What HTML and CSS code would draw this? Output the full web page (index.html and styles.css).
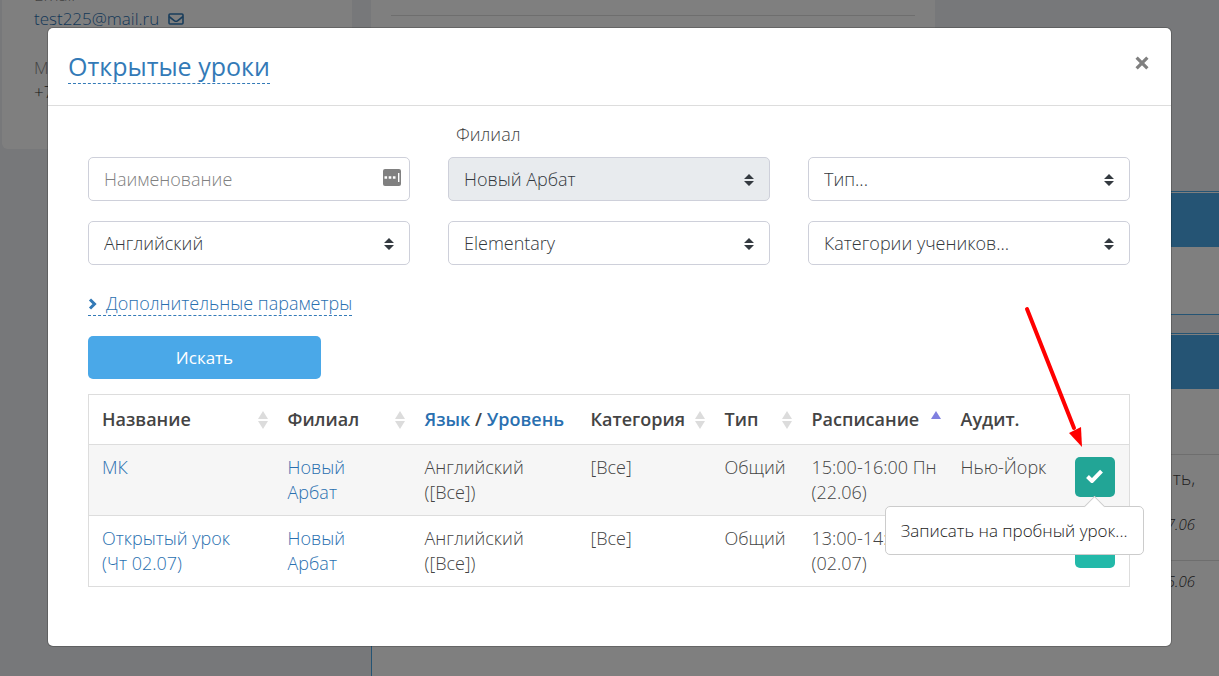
FILE: index.html
```html
<!DOCTYPE html>
<html lang="ru">

<head>
    <meta charset="UTF-8">
    <meta name="viewport" content="width=device-width, initial-scale=1.0">
    <title>Открытые уроки</title>
    <link rel="stylesheet" href="styles.css">
</head>

<body>
    <!-- page under the dialog -->
    <div class="page" aria-hidden="true">
        <aside class="profile">
            <div class="profile-label">Email</div>
            <div class="profile-value">
                <a href="#" tabindex="-1">test225@mail.ru</a>
                <svg class="mail" viewBox="0 0 16 12"><rect x="1" y="1" width="14" height="10" rx="1"/><path d="M1 3.5 L6.5 7.8 Q8 8.8 9.5 7.8 L15 3.5"/></svg>
            </div>
            <div class="profile-label phone-label">М</div>
            <div class="profile-value">+7</div>
        </aside>
        <main class="content">
            <div class="summary"><hr></div>
            <section class="panel">
                <div class="panel-head"></div>
                <div class="panel-body"></div>
            </section>
            <section class="panel panel-last">
                <div class="panel-head"></div>
                <div class="panel-body"></div>
                <div class="note">
                    <p>ть,</p>
                    <p class="date">7.06</p>
                </div>
                <div class="note">
                    <p class="date">5.06</p>
                </div>
            </section>
        </main>
    </div>

    <div class="overlay">
        <div class="modal" role="dialog" aria-labelledby="title">
            <div class="modal-header">
                <h4 id="title"><a class="dashed" href="#">Открытые уроки</a></h4>
                <button class="close" type="button" aria-label="Закрыть">
                    <svg viewBox="0 0 13 13"><path d="M1.500 1.500 L11.500 11.500 M11.500 1.500 L1.500 11.500"/></svg>
                </button>
            </div>
            <div class="modal-body">
                <form>
                    <div class="filters">
                        <div class="field">
                            <input type="text" placeholder="Наименование" aria-label="Наименование">
                            <svg class="keys" viewBox="0 0 18 17"><rect width="18" height="17" rx="2"/><path d="M1.500 7.200h2.600v2.600H1.500zM5.700 7.200h2.600v2.600H5.700zM9.900 7.200h2.600v2.600H9.900zM15 4h1.400v9H15z"/></svg>
                        </div>
                        <div class="field">
                            <label for="branch">Филиал</label>
                            <select id="branch" disabled><option>Новый Арбат</option></select>
                            <svg class="caret" viewBox="0 0 10 12"><path d="M0 5 L5 0 L10 5zM0 7 L5 12 L10 7z"/></svg>
                        </div>
                        <div class="field">
                            <select aria-label="Тип"><option>Тип...</option></select>
                            <svg class="caret" viewBox="0 0 10 12"><path d="M0 5 L5 0 L10 5zM0 7 L5 12 L10 7z"/></svg>
                        </div>
                        <div class="field">
                            <select aria-label="Язык"><option>Английский</option></select>
                            <svg class="caret" viewBox="0 0 10 12"><path d="M0 5 L5 0 L10 5zM0 7 L5 12 L10 7z"/></svg>
                        </div>
                        <div class="field">
                            <select aria-label="Уровень"><option>Elementary</option></select>
                            <svg class="caret" viewBox="0 0 10 12"><path d="M0 5 L5 0 L10 5zM0 7 L5 12 L10 7z"/></svg>
                        </div>
                        <div class="field">
                            <select aria-label="Категории учеников"><option>Категории учеников...</option></select>
                            <svg class="caret" viewBox="0 0 10 12"><path d="M0 5 L5 0 L10 5zM0 7 L5 12 L10 7z"/></svg>
                        </div>
                    </div>
                    <a class="dashed more" href="#"><svg class="chevron" viewBox="0 0 9 12"><path d="M2 1.500 L6.500 6 L2 10.500"/></svg>Дополнительные параметры</a>
                    <button class="search" type="button">Искать</button>
                </form>

                <table>
                    <colgroup>
                        <col class="c-name"><col class="c-branch"><col class="c-lang"><col class="c-cat">
                        <col class="c-type"><col class="c-time"><col class="c-room"><col class="c-action">
                    </colgroup>
                    <thead>
                        <tr>
                            <th>Название<svg class="sort" viewBox="0 0 10 18"><path d="M0 8 L5 0 L10 8zM0 10 L5 18 L10 10z"/></svg></th>
                            <th>Филиал<svg class="sort" viewBox="0 0 10 18"><path d="M0 8 L5 0 L10 8zM0 10 L5 18 L10 10z"/></svg></th>
                            <th><a href="#">Язык</a> / <a href="#">Уровень</a></th>
                            <th>Категория<svg class="sort" viewBox="0 0 10 18"><path d="M0 8 L5 0 L10 8zM0 10 L5 18 L10 10z"/></svg></th>
                            <th>Тип<svg class="sort" viewBox="0 0 10 18"><path d="M0 8 L5 0 L10 8zM0 10 L5 18 L10 10z"/></svg></th>
                            <th>Расписание<svg class="sort sort-active" viewBox="0 0 10 18"><path d="M0 8 L5 0 L10 8z"/></svg></th>
                            <th>Аудит.</th>
                            <th></th>
                        </tr>
                    </thead>
                    <tbody>
                        <tr>
                            <td><a href="#">МК</a></td>
                            <td><a href="#">Новый Арбат</a></td>
                            <td>Английский ([Все])</td>
                            <td>[Все]</td>
                            <td>Общий</td>
                            <td class="time">15:00-16:00 Пн (22.06)</td>
                            <td>Нью-Йорк</td>
                            <td>
                                <div class="action">
                                    <button class="enroll hovered" type="button" aria-describedby="tip">
                                        <svg viewBox="0 0 18 14"><path d="M2 7.500 L6.500 12 L16 2.200"/></svg>
                                    </button>
                                    <div class="tooltip" id="tip" role="tooltip">Записать на пробный урок...</div>
                                    <svg class="pointer" viewBox="0 0 60 142"><path class="shaft" d="M3 4 L50 123"/><path class="tip" d="M45 128 L57 122 L58 142z"/></svg>
                                </div>
                            </td>
                        </tr>
                        <tr>
                            <td><a href="#">Открытый урок (Чт&nbsp;02.07)</a></td>
                            <td><a href="#">Новый Арбат</a></td>
                            <td>Английский ([Все])</td>
                            <td>[Все]</td>
                            <td>Общий</td>
                            <td class="time">13:00-14:00 Чт (02.07)</td>
                            <td></td>
                            <td>
                                <div class="action">
                                    <button class="enroll" type="button" aria-label="Записать">
                                        <svg viewBox="0 0 18 14"><path d="M2 7.500 L6.500 12 L16 2.200"/></svg>
                                    </button>
                                </div>
                            </td>
                        </tr>
                    </tbody>
                </table>
            </div>
        </div>
    </div>
</body>

</html>
```

FILE: styles.css
```css
* {
    box-sizing: border-box;
}

body {
    margin: 0;
    height: 100vh;
    overflow: hidden;
    position: relative;
    background-color: #eef0f4;
    color: #444;
    font-family: "Open Sans", "Noto Sans", sans-serif;
    font-size: 18px;
    font-weight: 300;
    line-height: 25px;
}

a {
    color: #2a70b0;
    text-decoration: none;
}

p {
    margin: 0;
}

button,
input,
select {
    font: inherit;
}

svg {
    fill: none;
}

/* page under the dialog */
.page {
    display: flex;
    align-items: flex-start;
    gap: 19px;
    height: 100%;
    padding-left: 2px;
    overflow: hidden;
}

.profile {
    flex: 0 0 350px;
    height: 149px;
    padding-left: 32px;
    background-color: #fff;
    border-radius: 0 0 6px 6px;
    font-size: 17px;
    line-height: 24px;
}

.profile-label {
    color: #888;
    margin-top: -17px;
}

.phone-label {
    margin-top: 25px;
}

.profile-value {
    color: #333;
}

.mail {
    width: 16px;
    height: 12px;
    margin-left: 4px;
    stroke: #337ab7;
    stroke-width: 1.6;
}

.content {
    flex: 1;
}

.summary {
    width: 564px;
    height: 172px;
    padding: 15px 20px;
    background-color: #fff;
}

.summary hr {
    margin: 0;
    border: 0;
    border-top: 1px solid #ddd;
}

.panel {
    margin-top: 19px;
    padding-top: 1px;
    border: 1px solid #4aa8e8;
    border-right: 0;
    background-color: #fff;
}

.panel-last {
    margin-top: 18px;
    min-height: 400px;
}

.panel-head {
    height: 54px;
    background-color: #4aa8e8;
}

.panel-body {
    height: 67px;
}

.panel-last .panel-body {
    height: 65px;
}

.note {
    min-height: 106px;
    padding: 8px 24px;
    border-top: 1px solid #ddd;
    text-align: right;
}

.note p {
    margin-top: 3px;
}

.note .date {
    margin-top: 0;
    color: #333;
    font-size: 15px;
    font-style: italic;
    line-height: 24px;
}

.note p + .date {
    margin-top: 21px;
}

/* dialog */
.overlay {
    position: absolute;
    inset: 0;
    padding: 28px 48px 30px;
    background-color: rgba(0, 0, 0, 0.5);
}

.modal {
    height: 100%;
    background-color: #fff;
    border-radius: 5px;
    box-shadow: 0 0 0 1px rgba(0, 0, 0, 0.2);
}

.modal-header {
    display: flex;
    justify-content: space-between;
    align-items: flex-start;
    padding: 22px 20px 21px;
    border-bottom: 1px solid #ddd;
}

h4 {
    margin: 0;
    font-size: 25px;
    font-weight: 400;
    line-height: 32px;
}

.dashed {
    display: inline-block;
    border-bottom: 1px dashed #337ab7;
}

h4 .dashed {
    display: block;
    padding-bottom: 1px;
    color: #337ab7;
}

.close {
    display: flex;
    padding: 6px 2px;
    border: 0;
    background: none;
}

.close svg {
    width: 14px;
    height: 14px;
    stroke: #808080;
    stroke-width: 3;
}

.modal-body {
    padding: 16px 41px 0 40px;
}

.filters {
    display: grid;
    grid-template-columns: repeat(3, 1fr);
    align-items: end;
    gap: 20px 38px;
}

.field {
    position: relative;
}

.field label {
    display: block;
    padding-left: 8px;
    margin-bottom: 10px;
}

.field input,
.field select {
    display: block;
    width: 100%;
    height: 44px;
    padding: 0 15px;
    border: 1px solid #ced0da;
    border-radius: 5px;
    background-color: #fff;
    color: #33383d;
    opacity: 1;
    appearance: none;
}

.field select:disabled {
    background-color: #e8ebee;
}

.field input::placeholder {
    color: #808080;
    opacity: 1;
}

.caret {
    position: absolute;
    right: 16px;
    bottom: 15px;
    width: 10px;
    height: 12px;
    fill: #343a40;
    pointer-events: none;
}

.keys {
    position: absolute;
    right: 9px;
    bottom: 15px;
    width: 18px;
    height: 17px;
    fill: #808080;
}

.keys path {
    fill: #fff;
}

.more {
    margin-top: 26px;
    line-height: 24px;
}

.chevron {
    width: 9px;
    height: 12px;
    margin-right: 9px;
    stroke: #337ab7;
    stroke-width: 3;
}

.search {
    display: block;
    width: 233px;
    height: 43px;
    margin: 20px 0 15px;
    border: 0;
    border-radius: 5px;
    background-color: #4aa8e8;
    color: #fff;
    font-size: 17px;
    font-weight: 400;
}

table {
    width: 100%;
    table-layout: fixed;
    border: 1px solid #ddd;
    border-collapse: collapse;
}

.c-name { width: 186px; }
.c-branch { width: 137px; }
.c-lang { width: 166px; }
.c-cat { width: 134px; }
.c-type { width: 87px; }
.c-time { width: 149px; }
.c-room { width: 114px; }
.c-action { width: 68px; }

th,
td {
    padding: 10px 13px;
    text-align: left;
    vertical-align: top;
}

th {
    position: relative;
    padding: 12px 0 12px 13px;
    font-weight: 600;
    white-space: nowrap;
}

tbody tr {
    border-top: 1px solid #ddd;
}

tbody tr:first-child {
    background-color: #f6f6f6;
}

.sort {
    position: absolute;
    top: 16px;
    right: 7px;
    width: 10px;
    height: 18px;
    fill: #dcdcdc;
}

.sort-active {
    fill: #8080e0;
}

td.time,
td:last-child {
    padding-right: 0;
}

.action {
    position: relative;
    width: 40px;
    margin-top: 2px;
}

.enroll {
    display: flex;
    align-items: center;
    justify-content: center;
    width: 40px;
    height: 40px;
    padding: 0 0 2px;
    border: 0;
    border-radius: 5px;
    background-color: #23b9a9;
}

.hovered {
    background-color: #22a596;
}

.enroll svg {
    width: 19px;
    height: 14px;
    stroke: #fff;
    stroke-width: 4;
}

.tooltip {
    position: absolute;
    z-index: 1;
    top: 49px;
    right: -29px;
    padding: 11px 15px;
    border: 1px solid #ccc;
    border-radius: 5px;
    background-color: #fff;
    color: #222;
    font-size: 17px;
    white-space: nowrap;
}

.tooltip::before {
    content: "";
    position: absolute;
    top: -8px;
    right: 41px;
    width: 14px;
    height: 14px;
    border: 1px solid #ccc;
    border-right: 0;
    border-bottom: 0;
    background-color: #fff;
    transform: rotate(45deg);
}

.pointer {
    position: absolute;
    top: -152px;
    left: -51px;
    width: 60px;
    height: 142px;
    pointer-events: none;
}

.shaft {
    stroke: #f00;
    stroke-width: 4;
    stroke-linecap: round;
}

.tip {
    fill: #f00;
}
```
